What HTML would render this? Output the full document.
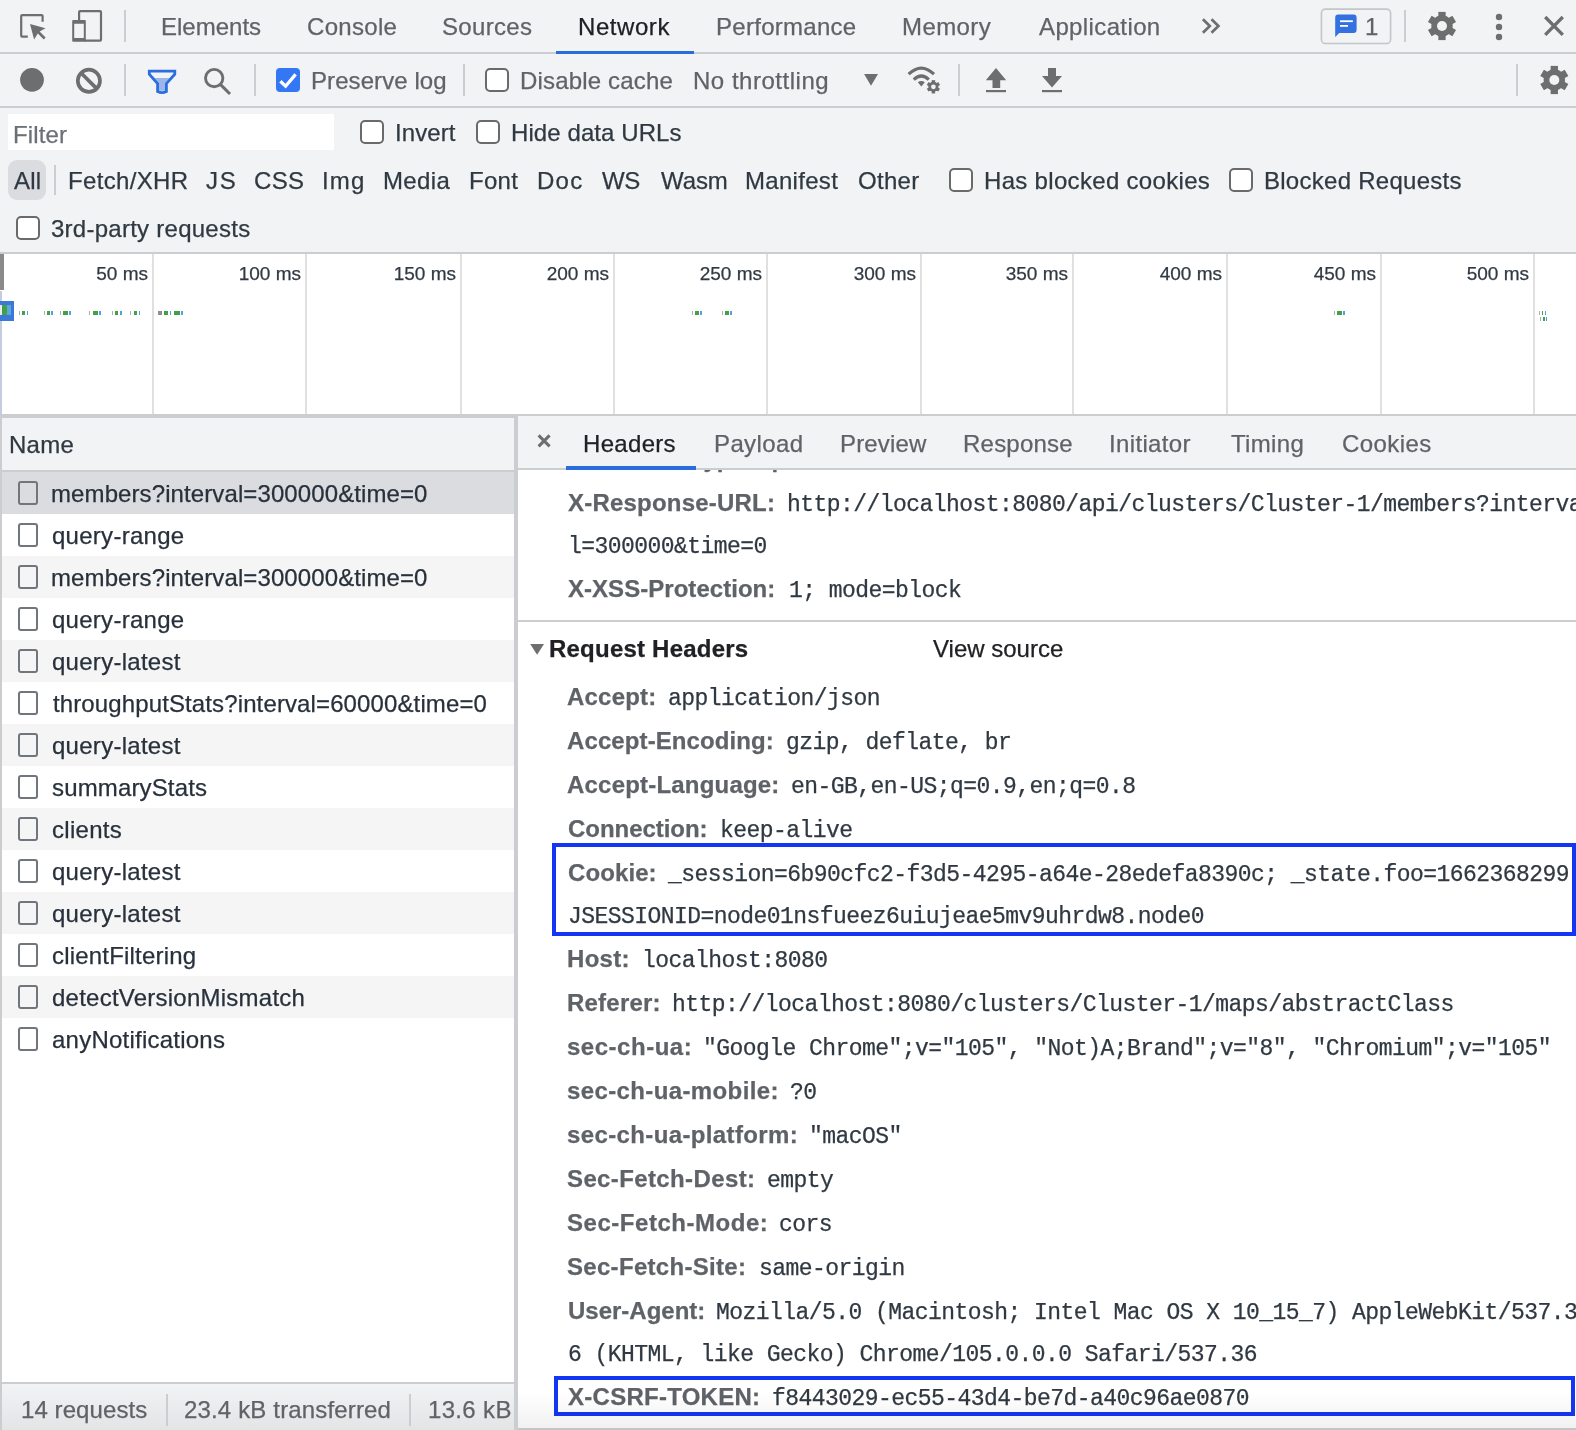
<!DOCTYPE html><html><head><meta charset="utf-8"><style>
html,body{margin:0;padding:0;}
body{width:1576px;height:1430px;overflow:hidden;position:relative;background:#fff;font-family:'Liberation Sans',sans-serif;}
.t{position:absolute;white-space:pre;line-height:30px;will-change:transform;-webkit-text-stroke:0.25px currentColor;}
.r{position:absolute;}
svg{position:absolute;overflow:visible;}
.cb{position:absolute;box-sizing:border-box;border:2px solid #6a6a6a;border-radius:5px;background:#fff;}
</style></head><body>
<div class="r" style="left:0px;top:0px;width:1576px;height:52px;background:#f1f3f4;"></div>
<div class="r" style="left:0px;top:52px;width:1576px;height:2px;background:#cbcdd1;"></div>
<svg style="left:0;top:0" width="120" height="52"><g fill="none" stroke="#6e6e6e" stroke-width="2.2">
<path d="M27.8 36.7 H22.2 Q21.2 36.7 21.2 35.7 V16.1 Q21.2 15.1 22.2 15.1 H41.6 Q42.6 15.1 42.6 16.1 V21.8"/>
</g>
<path d="M30 24 L45.5 28.2 L39.6 31.6 L45.6 37.6 L43.8 39.4 L37.8 33.4 L34.1 39.6 Z" fill="#6e6e6e"/>
<g fill="none" stroke="#6e6e6e" stroke-width="2.2">
<path d="M79.1 20.2 V12.1 Q79.1 11.1 80.1 11.1 H100 Q101 11.1 101 12.1 V39.7 Q101 40.7 100 40.7 H84.5"/>
</g>
<path d="M73.2 19.9 H84.8 Q85.8 19.9 85.8 20.9 V40.8 Q85.8 41.8 84.8 41.8 H73.2 Q72.2 41.8 72.2 40.8 V20.9 Q72.2 19.9 73.2 19.9 Z M74.2 23.7 V38 H83.8 V23.7 Z" fill="#6e6e6e" fill-rule="evenodd"/>
</svg>
<div class="r" style="left:124px;top:10px;width:2px;height:32px;background:#cbcdd1;"></div>
<div class="t" style="left:161.00px;top:12px;font-size:24px;font-weight:400;color:#5f6368;font-family:'Liberation Sans', sans-serif;letter-spacing:0.000px;">Elements</div>
<div class="t" style="left:306.70px;top:12px;font-size:24px;font-weight:400;color:#5f6368;font-family:'Liberation Sans', sans-serif;letter-spacing:0.317px;">Console</div>
<div class="t" style="left:442.30px;top:12px;font-size:24px;font-weight:400;color:#5f6368;font-family:'Liberation Sans', sans-serif;letter-spacing:0.333px;">Sources</div>
<div class="t" style="left:577.80px;top:12px;font-size:24px;font-weight:400;color:#202124;font-family:'Liberation Sans', sans-serif;letter-spacing:0.567px;">Network</div>
<div class="t" style="left:716.00px;top:12px;font-size:24px;font-weight:400;color:#5f6368;font-family:'Liberation Sans', sans-serif;letter-spacing:0.280px;">Performance</div>
<div class="t" style="left:902.00px;top:12px;font-size:24px;font-weight:400;color:#5f6368;font-family:'Liberation Sans', sans-serif;letter-spacing:0.400px;">Memory</div>
<div class="t" style="left:1039.00px;top:12px;font-size:24px;font-weight:400;color:#5f6368;font-family:'Liberation Sans', sans-serif;letter-spacing:0.380px;">Application</div>
<div class="r" style="left:556px;top:51px;width:138px;height:3px;background:#296cde;"></div>
<svg style="left:0;top:0" width="1576" height="52">
<path d="M1202.9 19.2 L1209.8 26 L1202.9 32.8 M1211.5 19.2 L1218.4 26 L1211.5 32.8" fill="none" stroke="#6e6e6e" stroke-width="2.7"/>
<rect x="1321.4" y="9.1" width="69.2" height="34.4" rx="4" fill="none" stroke="#c4c6c9" stroke-width="1.6"/>
<path d="M1338.2 14.6 H1353.6 Q1356.6 14.6 1356.6 17.6 V30 Q1356.6 33 1353.6 33 H1339.2 L1335.2 37 V17.6 Q1335.2 14.6 1338.2 14.6 Z" fill="#3371e0"/>
<rect x="1340" y="20.3" width="12.8" height="1.8" fill="#fff"/>
<rect x="1340" y="25" width="8" height="1.8" fill="#fff"/>
</svg>
<div class="t" style="left:1364.50px;top:12px;font-size:24px;font-weight:400;color:#5f6368;font-family:'Liberation Sans', sans-serif;letter-spacing:0.000px;">1</div>
<div class="r" style="left:1404px;top:10px;width:2px;height:32px;background:#cbcdd1;"></div>
<svg style="left:0;top:0" width="1576" height="120"><g transform="translate(1442,26) scale(1.0)" fill="#6e6e6e"><circle r="10.7"/><rect x="-3.65" y="-14.1" width="7.3" height="6" transform="rotate(0)"/><rect x="-3.65" y="-14.1" width="7.3" height="6" transform="rotate(60)"/><rect x="-3.65" y="-14.1" width="7.3" height="6" transform="rotate(120)"/><rect x="-3.65" y="-14.1" width="7.3" height="6" transform="rotate(180)"/><rect x="-3.65" y="-14.1" width="7.3" height="6" transform="rotate(240)"/><rect x="-3.65" y="-14.1" width="7.3" height="6" transform="rotate(300)"/><circle r="5" fill="#f1f3f4"/></g></svg>
<svg style="left:0;top:0" width="1576" height="52">
<circle cx="1499" cy="17" r="3.2" fill="#6e6e6e"/><circle cx="1499" cy="27" r="3.2" fill="#6e6e6e"/><circle cx="1499" cy="37" r="3.2" fill="#6e6e6e"/>
<path d="M1545.2 17 L1562.8 34.8 M1562.8 17 L1545.2 34.8" stroke="#6e6e6e" stroke-width="3.3" fill="none"/>
</svg>
<div class="r" style="left:0px;top:54px;width:1576px;height:52px;background:#f1f3f4;"></div>
<div class="r" style="left:0px;top:106px;width:1576px;height:2px;background:#cbcdd1;"></div>
<svg style="left:0;top:0" width="1576" height="108">
<circle cx="32" cy="79.8" r="11.9" fill="#6e6e6e"/>
<circle cx="88.9" cy="80.8" r="11.1" fill="none" stroke="#6e6e6e" stroke-width="3.7"/>
<path d="M81.3 73.2 L96.5 88.4" stroke="#6e6e6e" stroke-width="3.7"/>
<path d="M154.6 78 H169.4 L165.5 82.6 V90.8 H158.5 V82.6 Z" fill="#9bb7ea"/>
<path d="M149.3 71.2 H174.8 V74.3 L166.4 83.5 V91.5 Q162 93.6 157.6 91.5 V83.5 L149.3 74.3 Z" fill="none" stroke="#2a6ee0" stroke-width="2.8" stroke-linejoin="miter"/>
<circle cx="214.2" cy="78.1" r="8.7" fill="none" stroke="#6e6e6e" stroke-width="2.9"/>
<path d="M220.6 84.6 L230 94" stroke="#6e6e6e" stroke-width="3"/>
<path d="M864.1 74 H878 L871 85.8 Z" fill="#6e6e6e"/>
<path d="M908.6 74.2 Q921.3 62 934 74.2" fill="none" stroke="#6e6e6e" stroke-width="3.2"/>
<path d="M913.8 79.6 Q921.3 72.5 928.8 79.6" fill="none" stroke="#6e6e6e" stroke-width="3.2"/>
<path d="M917.8 82.3 Q921.3 79.5 924.8 82.3 L921.3 86.5 Z" fill="#6e6e6e"/>
<path d="M985.8 80.2 L996 68 L1006.2 80.2 H1000.2 V88 H992.5 V80.2 Z" fill="#6e6e6e"/>
<rect x="986" y="90" width="20" height="2.2" fill="#6e6e6e"/>
<path d="M1048 68 H1056 V76 H1062 L1052 87.6 L1042 76 H1048 Z" fill="#6e6e6e"/>
<rect x="1042" y="90" width="20" height="2.2" fill="#6e6e6e"/>
</svg>
<svg style="left:0;top:0" width="1576" height="120"><g transform="translate(933.4,86.8) scale(0.47)" fill="#6e6e6e"><circle r="10.7"/><rect x="-3.65" y="-14.1" width="7.3" height="6" transform="rotate(0)"/><rect x="-3.65" y="-14.1" width="7.3" height="6" transform="rotate(60)"/><rect x="-3.65" y="-14.1" width="7.3" height="6" transform="rotate(120)"/><rect x="-3.65" y="-14.1" width="7.3" height="6" transform="rotate(180)"/><rect x="-3.65" y="-14.1" width="7.3" height="6" transform="rotate(240)"/><rect x="-3.65" y="-14.1" width="7.3" height="6" transform="rotate(300)"/><circle r="5" fill="#f1f3f4"/></g></svg>
<div class="r" style="left:124px;top:64px;width:2px;height:32px;background:#cbcdd1;"></div>
<div class="r" style="left:254px;top:64px;width:2px;height:32px;background:#cbcdd1;"></div>
<svg style="left:0;top:0" width="400" height="108">
<rect x="276" y="68" width="24" height="24" rx="4" fill="#3377f5"/>
<path d="M280.4 81.2 L285.6 86.2 L295.6 74.4" fill="none" stroke="#fff" stroke-width="3.3"/>
</svg>
<div class="t" style="left:310.80px;top:66px;font-size:24px;font-weight:400;color:#5f6368;font-family:'Liberation Sans', sans-serif;letter-spacing:0.082px;">Preserve log</div>
<div class="r" style="left:463px;top:64px;width:2px;height:32px;background:#cbcdd1;"></div>
<div class="cb" style="left:485px;top:68px;width:24px;height:24px;background:#fff"></div>
<div class="t" style="left:520.00px;top:66px;font-size:24px;font-weight:400;color:#5f6368;font-family:'Liberation Sans', sans-serif;letter-spacing:0.167px;">Disable cache</div>
<div class="t" style="left:692.80px;top:66px;font-size:24px;font-weight:400;color:#5f6368;font-family:'Liberation Sans', sans-serif;letter-spacing:0.517px;">No throttling</div>
<div class="r" style="left:958px;top:64px;width:2px;height:32px;background:#cbcdd1;"></div>
<div class="r" style="left:1516px;top:64px;width:2px;height:32px;background:#cbcdd1;"></div>
<svg style="left:0;top:0" width="1576" height="120"><g transform="translate(1554.3,80) scale(1.0)" fill="#6e6e6e"><circle r="10.7"/><rect x="-3.65" y="-14.1" width="7.3" height="6" transform="rotate(0)"/><rect x="-3.65" y="-14.1" width="7.3" height="6" transform="rotate(60)"/><rect x="-3.65" y="-14.1" width="7.3" height="6" transform="rotate(120)"/><rect x="-3.65" y="-14.1" width="7.3" height="6" transform="rotate(180)"/><rect x="-3.65" y="-14.1" width="7.3" height="6" transform="rotate(240)"/><rect x="-3.65" y="-14.1" width="7.3" height="6" transform="rotate(300)"/><circle r="5" fill="#f1f3f4"/></g></svg>
<div class="r" style="left:0px;top:108px;width:1576px;height:144px;background:#f1f3f4;"></div>
<div class="r" style="left:0px;top:252px;width:1576px;height:2px;background:#cbcdd1;"></div>
<div class="r" style="left:8px;top:114px;width:326px;height:36px;background:#fff;"></div>
<div class="t" style="left:13.00px;top:120px;font-size:24px;font-weight:400;color:#6b7075;font-family:'Liberation Sans', sans-serif;letter-spacing:0.120px;">Filter</div>
<div class="cb" style="left:360px;top:120px;width:24px;height:24px;"></div>
<div class="t" style="left:394.60px;top:118px;font-size:24px;font-weight:400;color:#303942;font-family:'Liberation Sans', sans-serif;letter-spacing:0.080px;">Invert</div>
<div class="cb" style="left:476px;top:120px;width:24px;height:24px;"></div>
<div class="t" style="left:511.00px;top:118px;font-size:24px;font-weight:400;color:#303942;font-family:'Liberation Sans', sans-serif;letter-spacing:0.085px;">Hide data URLs</div>
<div class="r" style="left:8px;top:160px;width:38px;height:40px;background:#dadce0;border-radius:9px;"></div>
<div class="t" style="left:14.30px;top:166px;font-size:24px;font-weight:400;color:#303942;font-family:'Liberation Sans', sans-serif;letter-spacing:0.200px;">All</div>
<div class="r" style="left:54px;top:165px;width:2px;height:30px;background:#cbcdd1;"></div>
<div class="t" style="left:68.40px;top:166px;font-size:24px;font-weight:400;color:#303942;font-family:'Liberation Sans', sans-serif;letter-spacing:0.325px;">Fetch/XHR</div>
<div class="t" style="left:206.00px;top:166px;font-size:24px;font-weight:400;color:#303942;font-family:'Liberation Sans', sans-serif;letter-spacing:1.800px;">JS</div>
<div class="t" style="left:254.40px;top:166px;font-size:24px;font-weight:400;color:#303942;font-family:'Liberation Sans', sans-serif;letter-spacing:0.300px;">CSS</div>
<div class="t" style="left:321.60px;top:166px;font-size:24px;font-weight:400;color:#303942;font-family:'Liberation Sans', sans-serif;letter-spacing:1.200px;">Img</div>
<div class="t" style="left:382.50px;top:166px;font-size:24px;font-weight:400;color:#303942;font-family:'Liberation Sans', sans-serif;letter-spacing:0.375px;">Media</div>
<div class="t" style="left:468.80px;top:166px;font-size:24px;font-weight:400;color:#303942;font-family:'Liberation Sans', sans-serif;letter-spacing:0.300px;">Font</div>
<div class="t" style="left:537.30px;top:166px;font-size:24px;font-weight:400;color:#303942;font-family:'Liberation Sans', sans-serif;letter-spacing:1.250px;">Doc</div>
<div class="t" style="left:602.40px;top:166px;font-size:24px;font-weight:400;color:#303942;font-family:'Liberation Sans', sans-serif;letter-spacing:-0.500px;">WS</div>
<div class="t" style="left:660.50px;top:166px;font-size:24px;font-weight:400;color:#303942;font-family:'Liberation Sans', sans-serif;letter-spacing:-0.100px;">Wasm</div>
<div class="t" style="left:745.10px;top:166px;font-size:24px;font-weight:400;color:#303942;font-family:'Liberation Sans', sans-serif;letter-spacing:0.300px;">Manifest</div>
<div class="t" style="left:857.80px;top:166px;font-size:24px;font-weight:400;color:#303942;font-family:'Liberation Sans', sans-serif;letter-spacing:0.300px;">Other</div>
<div class="cb" style="left:949px;top:168px;width:24px;height:24px;"></div>
<div class="t" style="left:983.80px;top:166px;font-size:24px;font-weight:400;color:#303942;font-family:'Liberation Sans', sans-serif;letter-spacing:0.317px;">Has blocked cookies</div>
<div class="cb" style="left:1229px;top:168px;width:24px;height:24px;"></div>
<div class="t" style="left:1264.00px;top:166px;font-size:24px;font-weight:400;color:#303942;font-family:'Liberation Sans', sans-serif;letter-spacing:0.267px;">Blocked Requests</div>
<div class="cb" style="left:16px;top:216px;width:24px;height:24px;"></div>
<div class="t" style="left:51.30px;top:214px;font-size:24px;font-weight:400;color:#303942;font-family:'Liberation Sans', sans-serif;letter-spacing:0.259px;">3rd-party requests</div>
<div class="r" style="left:0px;top:254px;width:1576px;height:160px;background:#fff;"></div>
<div class="r" style="left:0px;top:414px;width:1576px;height:2px;background:#cbcdd1;"></div>
<div class="r" style="left:0px;top:254px;width:4px;height:36px;background:#8a8a8a;"></div>
<div class="r" style="left:0px;top:291px;width:2px;height:123px;background:#c5cbe0;"></div>
<div class="r" style="left:152px;top:254px;width:2px;height:160px;background:#e0e0e0;"></div>
<div class="t" style="left:0.00px;top:259px;font-size:19px;font-weight:400;color:#303942;font-family:'Liberation Sans', sans-serif;width:148px;text-align:right;">50 ms</div>
<div class="r" style="left:305px;top:254px;width:2px;height:160px;background:#e0e0e0;"></div>
<div class="t" style="left:0.00px;top:259px;font-size:19px;font-weight:400;color:#303942;font-family:'Liberation Sans', sans-serif;width:301px;text-align:right;">100 ms</div>
<div class="r" style="left:460px;top:254px;width:2px;height:160px;background:#e0e0e0;"></div>
<div class="t" style="left:0.00px;top:259px;font-size:19px;font-weight:400;color:#303942;font-family:'Liberation Sans', sans-serif;width:456px;text-align:right;">150 ms</div>
<div class="r" style="left:613px;top:254px;width:2px;height:160px;background:#e0e0e0;"></div>
<div class="t" style="left:0.00px;top:259px;font-size:19px;font-weight:400;color:#303942;font-family:'Liberation Sans', sans-serif;width:609px;text-align:right;">200 ms</div>
<div class="r" style="left:766px;top:254px;width:2px;height:160px;background:#e0e0e0;"></div>
<div class="t" style="left:0.00px;top:259px;font-size:19px;font-weight:400;color:#303942;font-family:'Liberation Sans', sans-serif;width:762px;text-align:right;">250 ms</div>
<div class="r" style="left:920px;top:254px;width:2px;height:160px;background:#e0e0e0;"></div>
<div class="t" style="left:0.00px;top:259px;font-size:19px;font-weight:400;color:#303942;font-family:'Liberation Sans', sans-serif;width:916px;text-align:right;">300 ms</div>
<div class="r" style="left:1072px;top:254px;width:2px;height:160px;background:#e0e0e0;"></div>
<div class="t" style="left:0.00px;top:259px;font-size:19px;font-weight:400;color:#303942;font-family:'Liberation Sans', sans-serif;width:1068px;text-align:right;">350 ms</div>
<div class="r" style="left:1226px;top:254px;width:2px;height:160px;background:#e0e0e0;"></div>
<div class="t" style="left:0.00px;top:259px;font-size:19px;font-weight:400;color:#303942;font-family:'Liberation Sans', sans-serif;width:1222px;text-align:right;">400 ms</div>
<div class="r" style="left:1380px;top:254px;width:2px;height:160px;background:#e0e0e0;"></div>
<div class="t" style="left:0.00px;top:259px;font-size:19px;font-weight:400;color:#303942;font-family:'Liberation Sans', sans-serif;width:1376px;text-align:right;">450 ms</div>
<div class="r" style="left:1533px;top:254px;width:2px;height:160px;background:#e0e0e0;"></div>
<div class="t" style="left:0.00px;top:259px;font-size:19px;font-weight:400;color:#303942;font-family:'Liberation Sans', sans-serif;width:1529px;text-align:right;">500 ms</div>
<div class="r" style="left:0px;top:301px;width:14px;height:20px;background:#3c78d8;"></div>
<div class="r" style="left:0px;top:305px;width:2px;height:10px;background:#e8eaf6;"></div>
<div class="r" style="left:2px;top:305px;width:5px;height:10px;background:#43a047;"></div>
<div class="r" style="left:7px;top:305px;width:4px;height:10px;background:#5ba7e0;"></div>
<div class="r" style="left:19px;top:311px;width:1px;height:4px;background:#b0b0b0;"></div>
<div class="r" style="left:22px;top:311px;width:3px;height:4px;background:#43a047;"></div>
<div class="r" style="left:27px;top:311px;width:1px;height:4px;background:#4ea3df;"></div>
<div class="r" style="left:44px;top:311px;width:1px;height:4px;background:#b0b0b0;"></div>
<div class="r" style="left:47px;top:311px;width:3px;height:4px;background:#43a047;"></div>
<div class="r" style="left:51px;top:311px;width:2px;height:4px;background:#4ea3df;"></div>
<div class="r" style="left:60px;top:311px;width:1px;height:4px;background:#b0b0b0;"></div>
<div class="r" style="left:63px;top:311px;width:5px;height:4px;background:#43a047;"></div>
<div class="r" style="left:69px;top:311px;width:2px;height:4px;background:#4ea3df;"></div>
<div class="r" style="left:89px;top:311px;width:1px;height:4px;background:#b0b0b0;"></div>
<div class="r" style="left:93px;top:311px;width:5px;height:4px;background:#43a047;"></div>
<div class="r" style="left:99px;top:311px;width:2px;height:4px;background:#4ea3df;"></div>
<div class="r" style="left:112px;top:311px;width:1px;height:4px;background:#b0b0b0;"></div>
<div class="r" style="left:115px;top:311px;width:3px;height:4px;background:#43a047;"></div>
<div class="r" style="left:120px;top:311px;width:2px;height:4px;background:#4ea3df;"></div>
<div class="r" style="left:130px;top:311px;width:1px;height:4px;background:#b0b0b0;"></div>
<div class="r" style="left:134px;top:311px;width:3px;height:4px;background:#43a047;"></div>
<div class="r" style="left:139px;top:311px;width:1px;height:4px;background:#4ea3df;"></div>
<div class="r" style="left:158px;top:311px;width:4px;height:4px;background:#8e8e8e;"></div>
<div class="r" style="left:164px;top:311px;width:4px;height:4px;background:#43a047;"></div>
<div class="r" style="left:170px;top:311px;width:1px;height:4px;background:#4ea3df;"></div>
<div class="r" style="left:174px;top:311px;width:6px;height:4px;background:#43a047;"></div>
<div class="r" style="left:181px;top:311px;width:2px;height:4px;background:#4ea3df;"></div>
<div class="r" style="left:692px;top:311px;width:1px;height:4px;background:#b0b0b0;"></div>
<div class="r" style="left:695px;top:311px;width:4px;height:4px;background:#43a047;"></div>
<div class="r" style="left:700px;top:311px;width:2px;height:4px;background:#4ea3df;"></div>
<div class="r" style="left:722px;top:311px;width:1px;height:4px;background:#b0b0b0;"></div>
<div class="r" style="left:725px;top:311px;width:4px;height:4px;background:#43a047;"></div>
<div class="r" style="left:730px;top:311px;width:2px;height:4px;background:#4ea3df;"></div>
<div class="r" style="left:1334px;top:311px;width:1px;height:4px;background:#b0b0b0;"></div>
<div class="r" style="left:1337px;top:311px;width:5px;height:4px;background:#43a047;"></div>
<div class="r" style="left:1343px;top:311px;width:2px;height:4px;background:#4ea3df;"></div>
<div class="r" style="left:1539px;top:311px;width:1px;height:4px;background:#b0b0b0;"></div>
<div class="r" style="left:1542px;top:311px;width:1px;height:4px;background:#43a047;"></div>
<div class="r" style="left:1545px;top:311px;width:1px;height:4px;background:#4ea3df;"></div>
<div class="r" style="left:1540px;top:317px;width:1px;height:4px;background:#b0b0b0;"></div>
<div class="r" style="left:1543px;top:317px;width:2px;height:4px;background:#43a047;"></div>
<div class="r" style="left:1546px;top:317px;width:1px;height:4px;background:#4ea3df;"></div>
<div class="r" style="left:0px;top:416px;width:514px;height:1014px;background:#fff;"></div>
<div class="r" style="left:0px;top:416px;width:514px;height:2px;background:#cbcdd1;"></div>
<div class="r" style="left:0px;top:416px;width:2px;height:1014px;background:#cbcdd1;"></div>
<div class="r" style="left:2px;top:418px;width:512px;height:52px;background:#f1f3f4;"></div>
<div class="r" style="left:2px;top:470px;width:512px;height:2px;background:#cbcdd1;"></div>
<div class="t" style="left:9.20px;top:430px;font-size:24px;font-weight:400;color:#303942;font-family:'Liberation Sans', sans-serif;letter-spacing:0.267px;">Name</div>
<div class="r" style="left:2px;top:472px;width:512px;height:42px;background:#dadce0;"></div>
<div class="cb" style="left:18px;top:481px;width:20px;height:24px;border-color:#70767c;border-radius:3px;background:transparent"></div>
<div class="t" style="left:50.50px;top:479px;font-size:24px;font-weight:400;color:#28313b;font-family:'Liberation Sans', sans-serif;letter-spacing:0.100px;">members?interval=300000&amp;time=0</div>
<div class="cb" style="left:18px;top:523px;width:20px;height:24px;border-color:#70767c;border-radius:3px;background:transparent"></div>
<div class="t" style="left:51.50px;top:521px;font-size:24px;font-weight:400;color:#28313b;font-family:'Liberation Sans', sans-serif;letter-spacing:0.270px;">query-range</div>
<div class="r" style="left:2px;top:556px;width:512px;height:42px;background:#f5f5f5;"></div>
<div class="cb" style="left:18px;top:565px;width:20px;height:24px;border-color:#70767c;border-radius:3px;background:transparent"></div>
<div class="t" style="left:50.50px;top:563px;font-size:24px;font-weight:400;color:#28313b;font-family:'Liberation Sans', sans-serif;letter-spacing:0.100px;">members?interval=300000&amp;time=0</div>
<div class="cb" style="left:18px;top:607px;width:20px;height:24px;border-color:#70767c;border-radius:3px;background:transparent"></div>
<div class="t" style="left:51.50px;top:605px;font-size:24px;font-weight:400;color:#28313b;font-family:'Liberation Sans', sans-serif;letter-spacing:0.270px;">query-range</div>
<div class="r" style="left:2px;top:640px;width:512px;height:42px;background:#f5f5f5;"></div>
<div class="cb" style="left:18px;top:649px;width:20px;height:24px;border-color:#70767c;border-radius:3px;background:transparent"></div>
<div class="t" style="left:51.50px;top:647px;font-size:24px;font-weight:400;color:#28313b;font-family:'Liberation Sans', sans-serif;letter-spacing:0.273px;">query-latest</div>
<div class="cb" style="left:18px;top:691px;width:20px;height:24px;border-color:#70767c;border-radius:3px;background:transparent"></div>
<div class="t" style="left:52.50px;top:689px;font-size:24px;font-weight:400;color:#28313b;font-family:'Liberation Sans', sans-serif;letter-spacing:0.119px;">throughputStats?interval=60000&amp;time=0</div>
<div class="r" style="left:2px;top:724px;width:512px;height:42px;background:#f5f5f5;"></div>
<div class="cb" style="left:18px;top:733px;width:20px;height:24px;border-color:#70767c;border-radius:3px;background:transparent"></div>
<div class="t" style="left:51.50px;top:731px;font-size:24px;font-weight:400;color:#28313b;font-family:'Liberation Sans', sans-serif;letter-spacing:0.273px;">query-latest</div>
<div class="cb" style="left:18px;top:775px;width:20px;height:24px;border-color:#70767c;border-radius:3px;background:transparent"></div>
<div class="t" style="left:51.50px;top:773px;font-size:24px;font-weight:400;color:#28313b;font-family:'Liberation Sans', sans-serif;letter-spacing:0.145px;">summaryStats</div>
<div class="r" style="left:2px;top:808px;width:512px;height:42px;background:#f5f5f5;"></div>
<div class="cb" style="left:18px;top:817px;width:20px;height:24px;border-color:#70767c;border-radius:3px;background:transparent"></div>
<div class="t" style="left:51.50px;top:815px;font-size:24px;font-weight:400;color:#28313b;font-family:'Liberation Sans', sans-serif;letter-spacing:0.300px;">clients</div>
<div class="cb" style="left:18px;top:859px;width:20px;height:24px;border-color:#70767c;border-radius:3px;background:transparent"></div>
<div class="t" style="left:51.50px;top:857px;font-size:24px;font-weight:400;color:#28313b;font-family:'Liberation Sans', sans-serif;letter-spacing:0.273px;">query-latest</div>
<div class="r" style="left:2px;top:892px;width:512px;height:42px;background:#f5f5f5;"></div>
<div class="cb" style="left:18px;top:901px;width:20px;height:24px;border-color:#70767c;border-radius:3px;background:transparent"></div>
<div class="t" style="left:51.50px;top:899px;font-size:24px;font-weight:400;color:#28313b;font-family:'Liberation Sans', sans-serif;letter-spacing:0.273px;">query-latest</div>
<div class="cb" style="left:18px;top:943px;width:20px;height:24px;border-color:#70767c;border-radius:3px;background:transparent"></div>
<div class="t" style="left:51.50px;top:941px;font-size:24px;font-weight:400;color:#28313b;font-family:'Liberation Sans', sans-serif;letter-spacing:0.193px;">clientFiltering</div>
<div class="r" style="left:2px;top:976px;width:512px;height:42px;background:#f5f5f5;"></div>
<div class="cb" style="left:18px;top:985px;width:20px;height:24px;border-color:#70767c;border-radius:3px;background:transparent"></div>
<div class="t" style="left:51.50px;top:983px;font-size:24px;font-weight:400;color:#28313b;font-family:'Liberation Sans', sans-serif;letter-spacing:0.240px;">detectVersionMismatch</div>
<div class="cb" style="left:18px;top:1027px;width:20px;height:24px;border-color:#70767c;border-radius:3px;background:transparent"></div>
<div class="t" style="left:51.50px;top:1025px;font-size:24px;font-weight:400;color:#28313b;font-family:'Liberation Sans', sans-serif;letter-spacing:0.233px;">anyNotifications</div>
<div class="r" style="left:2px;top:1382px;width:512px;height:2px;background:#cbcdd1;"></div>
<div class="r" style="left:2px;top:1384px;width:512px;height:46px;background:linear-gradient(#f1f3f4,#e3e4e6);"></div>
<div class="t" style="left:20.80px;top:1395px;font-size:24px;font-weight:400;color:#5f6368;font-family:'Liberation Sans', sans-serif;letter-spacing:0.080px;">14 requests</div>
<div class="r" style="left:166px;top:1394px;width:2px;height:32px;background:#cbcdd1;"></div>
<div class="t" style="left:184.40px;top:1395px;font-size:24px;font-weight:400;color:#5f6368;font-family:'Liberation Sans', sans-serif;letter-spacing:0.156px;">23.4 kB transferred</div>
<div class="r" style="left:409px;top:1394px;width:2px;height:32px;background:#cbcdd1;"></div>
<div class="t" style="left:428.00px;top:1395px;font-size:24px;font-weight:400;color:#5f6368;font-family:'Liberation Sans', sans-serif;letter-spacing:0.333px;">13.6 kB</div>
<div class="r" style="left:514px;top:416px;width:4px;height:1014px;background:#cbcdd1;"></div>
<div class="r" style="left:518px;top:416px;width:1058px;height:52px;background:#f1f3f4;"></div>
<div class="r" style="left:518px;top:468px;width:1058px;height:2px;background:#cbcdd1;"></div>
<svg style="left:0;top:0" width="1576" height="480"><path d="M538.6 435.4 L549.6 446.4 M549.6 435.4 L538.6 446.4" stroke="#6e6e6e" stroke-width="3"/></svg>
<div class="t" style="left:583.30px;top:429px;font-size:24px;font-weight:400;color:#202124;font-family:'Liberation Sans', sans-serif;letter-spacing:0.317px;">Headers</div>
<div class="t" style="left:713.70px;top:429px;font-size:24px;font-weight:400;color:#5f6368;font-family:'Liberation Sans', sans-serif;letter-spacing:0.383px;">Payload</div>
<div class="t" style="left:839.60px;top:429px;font-size:24px;font-weight:400;color:#5f6368;font-family:'Liberation Sans', sans-serif;letter-spacing:0.150px;">Preview</div>
<div class="t" style="left:963.40px;top:429px;font-size:24px;font-weight:400;color:#5f6368;font-family:'Liberation Sans', sans-serif;letter-spacing:0.229px;">Response</div>
<div class="t" style="left:1108.80px;top:429px;font-size:24px;font-weight:400;color:#5f6368;font-family:'Liberation Sans', sans-serif;letter-spacing:0.350px;">Initiator</div>
<div class="t" style="left:1231.00px;top:429px;font-size:24px;font-weight:400;color:#5f6368;font-family:'Liberation Sans', sans-serif;letter-spacing:0.340px;">Timing</div>
<div class="t" style="left:1342.00px;top:429px;font-size:24px;font-weight:400;color:#5f6368;font-family:'Liberation Sans', sans-serif;letter-spacing:0.417px;">Cookies</div>
<div class="r" style="left:566px;top:466px;width:130px;height:4px;background:#296cde;"></div>
<div style="position:absolute;left:518px;top:470px;width:1058px;height:960px;overflow:hidden;background:#fff">
<div class="t" style="left:50.00px;top:-26.5px;font-size:24px;font-weight:700;color:#5f6368;font-family:'Liberation Sans', sans-serif;">X-Content-Type-Options:</div>
<div class="t" style="left:352.00px;top:-24.5px;font-size:23px;font-weight:400;color:#303942;font-family:'Liberation Mono', monospace;letter-spacing:-0.552px;">nosniff</div>
<div class="t" style="left:50.30px;top:17.5px;font-size:24px;font-weight:700;color:#5f6368;font-family:'Liberation Sans', sans-serif;letter-spacing:0.207px;">X-Response-URL:</div>
<div class="t" style="left:269.00px;top:19.5px;font-size:23px;font-weight:400;color:#303942;font-family:'Liberation Mono', monospace;letter-spacing:-0.552px;">http://localhost:8080/api/clusters/Cluster-1/members?interva</div>
<div class="t" style="left:50.00px;top:61.5px;font-size:23px;font-weight:400;color:#303942;font-family:'Liberation Mono', monospace;letter-spacing:-0.552px;">l=300000&amp;time=0</div>
<div class="t" style="left:50.30px;top:103.5px;font-size:24px;font-weight:700;color:#5f6368;font-family:'Liberation Sans', sans-serif;letter-spacing:0.038px;">X-XSS-Protection:</div>
<div class="t" style="left:271.00px;top:105.5px;font-size:23px;font-weight:400;color:#303942;font-family:'Liberation Mono', monospace;letter-spacing:-0.552px;">1; mode=block</div>
<div class="r" style="left:0px;top:150px;width:1058px;height:2px;background:#cbcdd1;"></div>
<svg style="left:12px;top:174px" width="16" height="12"><path d="M0.2 0 H14 L7.1 10.7 Z" fill="#6e6e6e"/></svg>
<div class="t" style="left:30.60px;top:164px;font-size:24px;font-weight:700;color:#202124;font-family:'Liberation Sans', sans-serif;letter-spacing:0.221px;">Request Headers</div>
<div class="t" style="left:415.20px;top:164px;font-size:24px;font-weight:400;color:#202124;font-family:'Liberation Sans', sans-serif;letter-spacing:0.000px;">View source</div>
<div class="t" style="left:49.30px;top:211.5px;font-size:24px;font-weight:700;color:#5f6368;font-family:'Liberation Sans', sans-serif;letter-spacing:0.200px;">Accept:</div>
<div class="t" style="left:150.00px;top:213.5px;font-size:23px;font-weight:400;color:#303942;font-family:'Liberation Mono', monospace;letter-spacing:-0.552px;">application/json</div>
<div class="t" style="left:49.30px;top:255.5px;font-size:24px;font-weight:700;color:#5f6368;font-family:'Liberation Sans', sans-serif;letter-spacing:0.100px;">Accept-Encoding:</div>
<div class="t" style="left:268.00px;top:257.5px;font-size:23px;font-weight:400;color:#303942;font-family:'Liberation Mono', monospace;letter-spacing:-0.552px;">gzip, deflate, br</div>
<div class="t" style="left:49.30px;top:299.5px;font-size:24px;font-weight:700;color:#5f6368;font-family:'Liberation Sans', sans-serif;letter-spacing:0.200px;">Accept-Language:</div>
<div class="t" style="left:273.00px;top:301.5px;font-size:23px;font-weight:400;color:#303942;font-family:'Liberation Mono', monospace;letter-spacing:-0.552px;">en-GB,en-US;q=0.9,en;q=0.8</div>
<div class="t" style="left:49.90px;top:343.5px;font-size:24px;font-weight:700;color:#5f6368;font-family:'Liberation Sans', sans-serif;letter-spacing:-0.040px;">Connection:</div>
<div class="t" style="left:202.00px;top:345.5px;font-size:23px;font-weight:400;color:#303942;font-family:'Liberation Mono', monospace;letter-spacing:-0.552px;">keep-alive</div>
<div class="t" style="left:49.90px;top:387.5px;font-size:24px;font-weight:700;color:#5f6368;font-family:'Liberation Sans', sans-serif;letter-spacing:0.100px;">Cookie:</div>
<div class="t" style="left:150.00px;top:389.5px;font-size:23px;font-weight:400;color:#303942;font-family:'Liberation Mono', monospace;letter-spacing:-0.552px;">_session=6b90cfc2-f3d5-4295-a64e-28edefa8390c; _state.foo=1662368299</div>
<div class="t" style="left:50.00px;top:431.5px;font-size:23px;font-weight:400;color:#303942;font-family:'Liberation Mono', monospace;letter-spacing:-0.552px;">JSESSIONID=node01nsfueez6uiujeae5mv9uhrdw8.node0</div>
<div class="t" style="left:49.10px;top:473.5px;font-size:24px;font-weight:700;color:#5f6368;font-family:'Liberation Sans', sans-serif;letter-spacing:0.300px;">Host:</div>
<div class="t" style="left:124.00px;top:475.5px;font-size:23px;font-weight:400;color:#303942;font-family:'Liberation Mono', monospace;letter-spacing:-0.552px;">localhost:8080</div>
<div class="t" style="left:49.00px;top:517.5px;font-size:24px;font-weight:700;color:#5f6368;font-family:'Liberation Sans', sans-serif;letter-spacing:0.214px;">Referer:</div>
<div class="t" style="left:154.00px;top:519.5px;font-size:23px;font-weight:400;color:#303942;font-family:'Liberation Mono', monospace;letter-spacing:-0.552px;">http://localhost:8080/clusters/Cluster-1/maps/abstractClass</div>
<div class="t" style="left:49.30px;top:561.5px;font-size:24px;font-weight:700;color:#5f6368;font-family:'Liberation Sans', sans-serif;letter-spacing:0.522px;">sec-ch-ua:</div>
<div class="t" style="left:185.00px;top:563.5px;font-size:23px;font-weight:400;color:#303942;font-family:'Liberation Mono', monospace;letter-spacing:-0.552px;">&quot;Google Chrome&quot;;v=&quot;105&quot;, &quot;Not)A;Brand&quot;;v=&quot;8&quot;, &quot;Chromium&quot;;v=&quot;105&quot;</div>
<div class="t" style="left:49.30px;top:605.5px;font-size:24px;font-weight:700;color:#5f6368;font-family:'Liberation Sans', sans-serif;letter-spacing:0.381px;">sec-ch-ua-mobile:</div>
<div class="t" style="left:272.00px;top:607.5px;font-size:23px;font-weight:400;color:#303942;font-family:'Liberation Mono', monospace;letter-spacing:-0.552px;">?0</div>
<div class="t" style="left:49.30px;top:649.5px;font-size:24px;font-weight:700;color:#5f6368;font-family:'Liberation Sans', sans-serif;letter-spacing:0.372px;">sec-ch-ua-platform:</div>
<div class="t" style="left:291.00px;top:651.5px;font-size:23px;font-weight:400;color:#303942;font-family:'Liberation Mono', monospace;letter-spacing:-0.552px;">&quot;macOS&quot;</div>
<div class="t" style="left:49.30px;top:693.5px;font-size:24px;font-weight:700;color:#5f6368;font-family:'Liberation Sans', sans-serif;letter-spacing:0.379px;">Sec-Fetch-Dest:</div>
<div class="t" style="left:249.00px;top:695.5px;font-size:23px;font-weight:400;color:#303942;font-family:'Liberation Mono', monospace;letter-spacing:-0.552px;">empty</div>
<div class="t" style="left:49.30px;top:737.5px;font-size:24px;font-weight:700;color:#5f6368;font-family:'Liberation Sans', sans-serif;letter-spacing:0.536px;">Sec-Fetch-Mode:</div>
<div class="t" style="left:261.00px;top:739.5px;font-size:23px;font-weight:400;color:#303942;font-family:'Liberation Mono', monospace;letter-spacing:-0.552px;">cors</div>
<div class="t" style="left:49.30px;top:781.5px;font-size:24px;font-weight:700;color:#5f6368;font-family:'Liberation Sans', sans-serif;letter-spacing:0.307px;">Sec-Fetch-Site:</div>
<div class="t" style="left:241.00px;top:783.5px;font-size:23px;font-weight:400;color:#303942;font-family:'Liberation Mono', monospace;letter-spacing:-0.552px;">same-origin</div>
<div class="t" style="left:49.80px;top:825.5px;font-size:24px;font-weight:700;color:#5f6368;font-family:'Liberation Sans', sans-serif;letter-spacing:0.000px;">User-Agent:</div>
<div class="t" style="left:198.00px;top:827.5px;font-size:23px;font-weight:400;color:#303942;font-family:'Liberation Mono', monospace;letter-spacing:-0.552px;">Mozilla/5.0 (Macintosh; Intel Mac OS X 10_15_7) AppleWebKit/537.3</div>
<div class="t" style="left:50.00px;top:869.5px;font-size:23px;font-weight:400;color:#303942;font-family:'Liberation Mono', monospace;letter-spacing:-0.552px;">6 (KHTML, like Gecko) Chrome/105.0.0.0 Safari/537.36</div>
<div class="t" style="left:50.30px;top:911.5px;font-size:24px;font-weight:700;color:#5f6368;font-family:'Liberation Sans', sans-serif;letter-spacing:0.267px;">X-CSRF-TOKEN:</div>
<div class="t" style="left:254.00px;top:913.5px;font-size:23px;font-weight:400;color:#303942;font-family:'Liberation Mono', monospace;letter-spacing:-0.552px;">f8443029-ec55-43d4-be7d-a40c96ae0870</div>
<div class="r" style="left:34px;top:373px;width:1024px;height:93px;background:transparent;box-sizing:border-box;border:4.6px solid #1336f4;"></div>
<div class="r" style="left:36px;top:906px;width:1021px;height:40px;background:transparent;box-sizing:border-box;border:4.6px solid #1336f4;"></div>
</div>
<div class="r" style="left:518px;top:1392px;width:1058px;height:36px;background:linear-gradient(rgba(0,0,0,0),rgba(0,0,0,0.055));"></div>
<div class="r" style="left:518px;top:1428px;width:1058px;height:2px;background:#c4c5c9;"></div>
</body></html>
